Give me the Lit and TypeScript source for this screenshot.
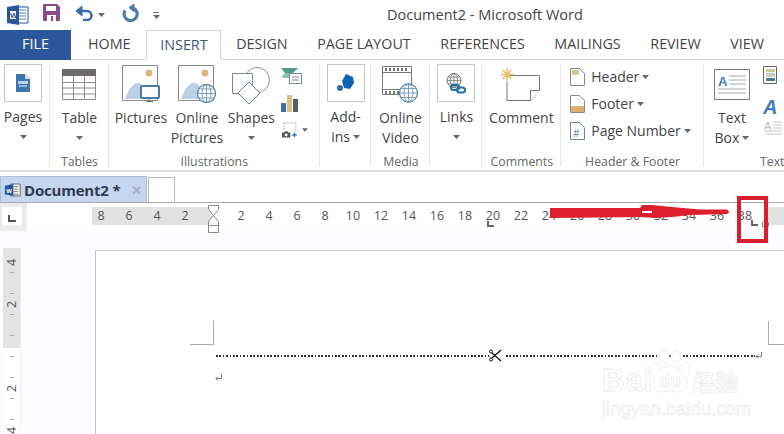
import { LitElement, html, css } from "lit";
import { customElement } from "lit/decorators.js";

const caret = html`<svg class="caret" width="7" height="4" viewBox="0 0 7 4"><path d="M0 0h7L3.500 4z" fill="#666"/></svg>`;

const icons = {
  word: html`<svg width="22" height="20" viewBox="0 0 22 20"><path d="M9 2h12v16H9z" fill="#fff" stroke="#2b579a"/><path d="M12 5h7M12 8h7M12 11h7M12 14h7" stroke="#5d7fb5"/><path d="M0 2l12-2v20L0 18z" fill="#2b579a"/><path d="M3 6h6v8H3z" fill="#fff"/><text x="3" y="13" font-size="8" font-weight="700" fill="#2b579a" font-family="Liberation Sans">W</text></svg>`,
  save: html`<svg width="17" height="17" viewBox="0 0 17 17"><path d="M1 0h13l3 3v13a1 1 0 0 1-1 1H1a1 1 0 0 1-1-1V1a1 1 0 0 1 1-1z" fill="#8a4a8c"/><path d="M3 2h10v5H3z" fill="#fff"/><path d="M4 11h9v6H4z" fill="#fff"/><path d="M8 12h2v5H8z" fill="#8a4a8c"/></svg>`,
  undo: html`<svg width="19" height="16" viewBox="0 0 19 16"><path d="M5 6h7a4.500 4.500 0 0 1 0 9H8" fill="none" stroke="#3b6ea8" stroke-width="2.600"/><path d="M7 1v10L1 6z" fill="#3b6ea8" stroke="#3b6ea8" stroke-linejoin="round"/></svg>`,
  redo: html`<svg width="18" height="18" viewBox="0 0 18 18"><path d="M11 4A6.500 6.500 0 1 1 3.200 6.500" fill="none" stroke="#4f7ea8" stroke-width="3.200"/><path d="M7 3.500L12 0v8z" fill="#4f7ea8" stroke="#4f7ea8" stroke-linejoin="round"/></svg>`,
  page: html`<svg width="14" height="18" viewBox="0 0 14 18"><path d="M0 0h9l5 5v13H0z" fill="#3d75b0"/><path d="M9 0l5 5H9z" fill="#cfe0f0"/><path d="M2 7h10v3H2z" fill="#b9d0e6"/><path d="M3 12h8" stroke="#fff"/></svg>`,
  table: html`<svg width="34" height="31" viewBox="0 0 34 31"><path d="M0 0h34v7H0z" fill="#6e6a6a"/><path d="M.5 7v23.500h33V7M.5 13.500h33M.5 19h33M.5 25h33M11.500 7v24M22.500 7v24" fill="none" stroke="#8f8a8a"/></svg>`,
  pics: html`<svg width="38" height="38" viewBox="0 0 38 38"><path d="M.5.500h35v35H.500z" fill="#fff" stroke="#8a8a8a"/><circle cx="27" cy="8" r="3.500" fill="#dcb67a"/><path d="M3 34c3-8 7-16 13-16 4 0 6 4 8 6l-3 10z" fill="#bccfe6"/><path d="M19 20h19v13H19z" fill="#fff" stroke="none"/><rect x="19" y="21" width="18" height="12" rx="1" fill="#fff" stroke="#4b7a9b" stroke-width="2"/><path d="M27 33v3M24 36.500h7" stroke="#4b7a9b"/></svg>`,
  online: html`<svg width="38" height="38" viewBox="0 0 38 38"><path d="M.5.500h35v35H.500z" fill="#fff" stroke="#8a8a8a"/><circle cx="27" cy="8" r="3.500" fill="#dcb67a"/><path d="M3 34c3-8 7-16 13-16 4 0 6 4 8 6l-3 10z" fill="#bccfe6"/><circle cx="28.500" cy="28.500" r="9" fill="#fff" stroke="#5e8cab" stroke-width="1.300"/><path d="M19.500 28.500h18M28.500 19.500v18M21 24h15M21 33h15" stroke="#5e8cab" stroke-width=".8"/><ellipse cx="28.500" cy="28.500" rx="4.500" ry="9" fill="none" stroke="#5e8cab" stroke-width=".8"/></svg>`,
  shapes: html`<svg class="ov" width="40" height="38" viewBox="0 -2 40 38"><circle cx="26" cy="13" r="12.500" fill="#fff" stroke="#8c979f"/><path d="M1.500 6.500h20v20h-20z" fill="#fff" stroke="#7d8a94"/><path d="M18 15l11 11-11 11-11-11z" fill="#fff" stroke="#5e7f98"/></svg>`,
  smart: html`<svg width="21" height="16" viewBox="0 0 21 16"><path d="M0 0h17l-5 5H4z" fill="#4f9a8a"/><path d="M0 9l4-4h5v5H4z" fill="#8ec0b0"/><rect x="8.500" y="5.500" width="12" height="10" fill="#fff" stroke="#7a8a90"/><path d="M11 9h7M11 12h7" stroke="#7a8a90"/></svg>`,
  chart: html`<svg width="17" height="17" viewBox="0 0 17 17"><path d="M0 8h5v9H0z" fill="#3c6ea3"/><path d="M6 0h5v17H6z" fill="#d8bd8d"/><path d="M12 4h5v13h-5z" fill="#5e5e5e"/></svg>`,
  shot: html`<svg width="18" height="18" viewBox="0 0 18 18"><path d="M2.500.500h14v12" fill="none" stroke="#888" stroke-dasharray="1.500 1.500"/><path d="M2.500.500v9" stroke="#888" stroke-dasharray="1.500 1.500"/><path d="M0 12h2.500l1-1.500h3l1 1.500H10v6H0z" fill="#5a5a5a"/><circle cx="5" cy="15" r="1.700" fill="#fff"/><path d="M12 15h5.500M14.750 12.250v5.500" stroke="#2b7cb5" stroke-width="1.700"/></svg>`,
  addin: html`<svg width="17" height="18" viewBox="0 0 17 18"><path d="M9 0l7 3 1 6-4 6-6-1-2-7z" fill="#0f62b5"/><circle cx="3" cy="14" r="3" fill="#2e6eb0"/></svg>`,
  video: html`<svg width="36" height="37" viewBox="0 0 36 37"><path d="M.5.500h29v28H.500z" fill="#fff" stroke="#777"/><path d="M.5 6.500h29M.5 23.500h29" stroke="#777"/><path d="M3 2h2v3H3zM7 2h2v3H7zM11 2h2v3h-2zM15 2h2v3h-2zM19 2h2v3h-2zM23 2h2v3h-2zM3 25h2v3H3zM7 25h2v3H7zM11 25h2v3h-2zM15 25h2v3h-2z" fill="#777"/><circle cx="26.500" cy="27" r="9" fill="#fff" stroke="#5e8cab" stroke-width="1.300"/><path d="M17.500 27h18M26.500 18v18M19 22.500h15M19 31.500h15" stroke="#5e8cab" stroke-width=".8"/><ellipse cx="26.500" cy="27" rx="4.500" ry="9" fill="none" stroke="#5e8cab" stroke-width=".8"/></svg>`,
  links: html`<svg width="20" height="21" viewBox="0 0 20 21"><circle cx="8" cy="7.500" r="7" fill="#fff" stroke="#777"/><path d="M1 7.500h14M8 .500v14M2 4h12M2 11h12" stroke="#777" stroke-width=".8"/><ellipse cx="8" cy="7.500" rx="3.500" ry="7" fill="none" stroke="#777" stroke-width=".8"/><rect x="5" y="12" width="8" height="5" rx="2.500" fill="none" stroke="#1f6fa5" stroke-width="2"/><rect x="11" y="14.500" width="8" height="5" rx="2.500" fill="none" stroke="#1f6fa5" stroke-width="2"/></svg>`,
  comment: html`<svg width="40" height="33" viewBox="0 0 40 33"><path d="M6 7.500h32.500V22l-9 10.500H6V14" fill="#fff" stroke="#777"/><path d="M29.500 32.500V22.500h9" fill="#fff" stroke="#777"/><g stroke="#e8c26a" stroke-width="1.600"><path d="M6 0v13M0 6.500h13M1.500 2l9 9M10.500 2l-9 9"/></g></svg>`,
  header: html`<svg width="15" height="18" viewBox="0 0 15 18"><path d="M.5.500h9l5 5v12H.500z" fill="#fff" stroke="#888"/><path d="M2 2h7v5H2z" fill="#d8c69a"/></svg>`,
  footer: html`<svg width="15" height="18" viewBox="0 0 15 18"><path d="M.5.500h9l5 5v12H.500z" fill="#fff" stroke="#888"/><path d="M1 11h13v6H1z" fill="#d8b26e"/></svg>`,
  pnum: html`<svg width="15" height="18" viewBox="0 0 15 18"><path d="M.5.500h9l5 5v12H.500z" fill="#fff" stroke="#5e8cab"/><text x="3.500" y="15" font-size="10" fill="#2b6ea5" font-family="Liberation Sans">#</text></svg>`,
  textbox: html`<svg width="36" height="31" viewBox="0 0 36 31"><path d="M.5.500h35v30H.500z" fill="#fff" stroke="#777"/><text x="4" y="17" font-size="13" font-weight="700" fill="#3f7cb8" font-family="Liberation Sans">A</text><path d="M15 7h17M15 11h17M15 15h17M4 20h28M4 24h28" stroke="#a8a8a8"/></svg>`,
  parts: html`<svg width="15" height="18" viewBox="0 0 15 18"><path d="M.5.500h13v17H.500z" fill="#fff" stroke="#666"/><path d="M3 3h9v3H3z" fill="#d8c69a"/><path d="M3 8h9M3 10h9" stroke="#999"/><path d="M3 12h9v3H3z" fill="#4b7a9b"/></svg>`,
  wordart: html`<span class="wa">A</span>`,
  drop: html`<svg width="20" height="17" viewBox="0 0 20 17"><text x="0" y="10" font-size="11" fill="#aeb8c4" font-family="Liberation Sans">A</text><path d="M9 2h9M9 5h9M9 8h9M1 11h17M1 14h17" stroke="#c4c4c4"/></svg>`,
  docw: html`<svg width="17" height="16" viewBox="0 0 20 18"><path d="M8 2h11v14H8z" fill="#fff" stroke="#555"/><path d="M11 5h6M11 8h6M11 11h6M11 14h6" stroke="#666"/><path d="M1 4l10-2v14L1 14z" fill="#2b579a"/><text x="2.500" y="12" font-size="7" font-weight="700" fill="#fff" font-family="Liberation Sans">W</text></svg>`,
  scissors: html`<svg width="13" height="13" viewBox="0 0 13 13"><path d="M12 1L3 9M12 12L3 4" stroke="#111" stroke-width="1.300" fill="none"/><circle cx="2" cy="2.500" r="1.500" fill="none" stroke="#111"/><circle cx="2" cy="10.500" r="1.500" fill="none" stroke="#111"/></svg>`,
  ret: html`<svg width="8" height="8" viewBox="0 0 8 8"><path d="M6.500 0v4.500H1M3 2.500l-2 2 2 2" fill="none" stroke="#777"/></svg>`,
};

@customElement("app-root")
export class AppRoot extends LitElement {
  static styles = css`
    :host { display: block; width: 784px; height: 434px; }
    * { box-sizing: border-box; }
    .app { position: relative; width: 784px; height: 434px; overflow: hidden; background: #fff; color: #444;
      font-family: "Open Sans", "Noto Sans", sans-serif; font-size: 14px; line-height: 20px; display: flex; flex-direction: column; }
    .title { height: 30px; flex: none; display: flex; align-items: center; position: relative; padding-left: 7px; }
    .qat { display: flex; align-items: center; }
    .q-save { margin-left: 14px; }
    .q-undo { margin-left: 15px; }
    .q-undo-c { margin-left: 4px; }
    .q-redo { margin-left: 17px; }
    .q-more { margin-left: 13px; display: flex; flex-direction: column; gap: 2px; }
    .q-more i { display: block; width: 6px; height: 1px; background: #777; }
    .q-more svg { display: block; }
    .ov { overflow: visible; }
    .doc-title { position: absolute; left: 387px; top: 5px; font-size: 14.500px; white-space: nowrap; color: #444; }
    .tabs { height: 30px; flex: none; display: flex; border-bottom: 1px solid #d4d4d4; font-size: 14.300px; }
    .tab { padding: 0 14.800px; line-height: 28px; white-space: nowrap; }
    .tab.file { width: 71px; padding: 0; background: #2b579a; color: #fff; text-align: center; height: 30px; margin-right: 2.200px; }
    .tab.insert { margin: 0 0 -1px 1.200px; height: 30px; border: 1px solid #d4d4d4; border-bottom: 1px solid #fff; background: #fff; color: #3b5a7c; width: 75px; padding: 0; text-align: center; }
    .ribbon { height: 112px; flex: none; display: flex; border-bottom: 2px solid #dcdcdc; }
    .group { position: relative; height: 110px; display: flex; flex-direction: column; }
    .group::after { content: ""; position: absolute; right: 0; top: 4px; bottom: 4px; width: 1px; background: #e2e2e2; }
    .g-pages { width: 50px; } .g-tables { width: 59px; } .g-ill { width: 211px; } .g-add { width: 52px; }
    .g-media { width: 59px; } .g-links { width: 52px; } .g-com { width: 79px; } .g-hf { width: 143px; } .g-text { width: 80px; }
    .g-text::after { display: none; }
    .gc { flex: 1; display: flex; min-height: 0; }
    .glabel { height: 18px; line-height: 20px; text-align: center; font-size: 12.300px; color: #666; white-space: nowrap; }
    .g-text .glabel { text-align: left; padding-left: 56px; }
    .btn { display: flex; flex-direction: column; align-items: center; text-align: center; white-space: nowrap; line-height: 20px; }
    .icon { height: 48px; display: flex; align-items: center; justify-content: center; flex: none; }
    .boxed { width: 38px; height: 38px; border: 1px solid #c6c6c6; margin: 4px 0 6px; flex: none; display: flex; align-items: center; justify-content: center; }
    .boxed + .lbl { margin-top: -1px; }
    .lbl { display: flex; flex-direction: column; align-items: center; gap: 0; }
    .caret { display: block; }
    .caret-line { height: 20px; display: flex; align-items: center; justify-content: center; }
    .inline-caret { display: flex; align-items: center; gap: 3px; }
    .b-pages { width: 38px; margin-left: 4px; }
    .b-table { width: 59px; }
    .b-pic { width: 56px; margin-left: 4px; } .b-onl { width: 56px; } .b-shp { width: 53px; }
    .b-add { width: 38px; margin-left: 7px; }
    .b-vid { width: 59px; padding-right: 1px; }
    .b-lnk { width: 38px; margin-left: 7px; }
    .b-com { width: 78px; }
    .b-txt { width: 50px; margin-left: 4px; }
    .col3 { display: flex; flex-direction: column; padding: 8px 0 0 3px; }
    .col3-ill { width: 30px; }
    .s1 { height: 27px; display: flex; align-items: flex-start; }
    .col3-ill .s2 { height: 26px; align-items: flex-start; }
    .s2 { height: 27px; display: flex; align-items: center; }
    .s3 { display: flex; gap: 5px; padding-left: 1px; }
    .s3 .caret { margin-top: 7px; }
    .hf { display: flex; flex-direction: column; padding: 7px 0 0 9px; gap: 7px; }
    .hf-row { display: flex; align-items: center; height: 20px; gap: 6px; white-space: nowrap; }
    .hf-row .inline-caret { gap: 3px; }
    .ts { display: flex; flex-direction: column; padding: 6px 0 0 7px; }
    .wa { font: italic 700 20px "Liberation Sans", sans-serif; color: #3f7cb8; line-height: 20px; }
    .doctabs { height: 31px; flex: none; display: flex; align-items: flex-end; padding-top: 4px; border-bottom: 1px solid #aaa; gap: 1px; }
    .dtab { width: 147px; height: 26px; background: #c5d6ef; border: 1px solid #a9bcd8; border-bottom: 0; display: flex; align-items: center; padding-left: 3px; gap: 3px; }
    .dtab b { font-size: 15px; color: #2e3d52; font-weight: 700; white-space: nowrap; letter-spacing: -.2px; }
    .dtab span { margin-left: 8px; color: #a5b1c2; font-size: 13px; font-weight: 700; }
    .dnew { width: 27px; height: 25px; border: 1px solid #bdbdbd; border-bottom: 0; background: #fff; }
    .hruler { height: 28px; flex: none; display: flex; position: relative; }
    .corner { width: 27px; background: #ebebeb; padding: 4px 5px 6px 2px; flex: none; }
    .corner > div { height: 100%; background: #fff; display: flex; align-items: center; justify-content: center; }
    .l-mark { width: 8px; height: 7px; border-left: 2px solid #555; border-bottom: 2px solid #555; margin-top: 4px; }
    .track { flex: 1; margin: 4px 0 0 60px; height: 18px; display: flex; background: linear-gradient(90deg, #fff 0, #fff 5px, #e2e2e2 5px, #e2e2e2 126px, #fff 126px, #fff 681px, #e2e2e2 681px); }
    .rn { flex: 0 0 28px; text-align: center; font-size: 12.500px; line-height: 18px; color: #555; }
    .work { flex: 1; display: flex; background: #fcfbfd; padding-top: 19px; min-height: 0; }
    .side { width: 95px; flex: none; padding-left: 3px; }
    .vruler { width: 18px; margin-top: -2px; height: 200px; background: linear-gradient(#e3e3e3 0, #e3e3e3 100px, #fff 100px); overflow: hidden; padding-top: 9px; border-right: 1px solid #eee; }
    .vc { height: 10.500px; display: flex; align-items: center; justify-content: center; position: relative; }
    .vc i { width: 4px; height: 1px; background: #aaa; display: block; }
    .vc span { font-size: 12.500px; line-height: 11px; transform: rotate(-90deg); color: #555; }
    .page { flex: 1; background: #fff; border-left: 1px solid #c4c2c6; border-top: 1px solid #c9c7cb; padding-top: 70px; position: relative; }
    .crops { display: flex; justify-content: space-between; padding-left: 94px; }
    .crop { width: 24px; height: 24px; border-right: 1px solid #aaa; border-bottom: 1px solid #aaa; }
    .crop.r { width: 16px; border-right: 0; border-left: 1px solid #aaa; }
    .dots { display: flex; align-items: center; margin: 4px 0 0 120px; width: 547px; height: 13px; }
    .dl { height: 2px; background: repeating-linear-gradient(90deg, #333 0 1.700px, transparent 1.700px 3.400px); }
    .dl1 { width: 273px; } .dl2 { width: 249px; }
    .sc { width: 17px; display: flex; justify-content: flex-start; }
    .rets { display: flex; padding: 0 0 0 119px; margin-top: 12px; height: 12px; }
    .wm { position: absolute; left: 602px; top: 350px; width: 140px; color: #fff; font-family: "Liberation Sans", sans-serif; -webkit-text-stroke: 1px #eeeeee; display: flex; flex-direction: column; }
    .wm-a { display: flex; align-items: center; line-height: 26px; font-weight: 700; white-space: nowrap; margin-top: 18px; position: relative; }
    .wm-bai { width: 45px; font-size: 31px; letter-spacing: 1px; }
    .wm-du { width: 46px; text-align: center; font-size: 18px; }
    .wm-a em { font-style: normal; font-family: "Noto Sans CJK SC", sans-serif; font-size: 22.500px; }
    .wm-b { font-size: 18.500px; line-height: 18px; white-space: nowrap; margin-top: 6px; -webkit-text-stroke: .8px #eeeeee; }
    .paw { position: absolute; left: 45px; top: 0; }
    .over { position: absolute; left: 0; top: 0; pointer-events: none; }
    .redbox { position: absolute; left: 737px; top: 196px; width: 31px; height: 47px; border: 4px solid #d81f2e; }
    .tabstop { position: absolute; width: 7px; height: 6px; border-left: 2px solid #666; border-bottom: 2px solid #666; }
    .ts1 { left: 487px; top: 221px; }
    .ts2 { left: 751px; top: 220px; }
    .wm-hole { position: absolute; left: 642px; top: 211px; width: 10px; height: 2px; background: #fff; }
  `;

  private big(cls: string, icon: unknown, lines: unknown[]) {
    return html`<div class="btn ${cls}"><div class="icon">${icon}</div><div class="lbl">${lines}</div></div>`;
  }
  private boxed(cls: string, icon: unknown, lines: unknown[]) {
    return html`<div class="btn ${cls}"><div class="boxed">${icon}</div><div class="lbl">${lines}</div></div>`;
  }

  render() {
    const caretLine = html`<div class="caret-line">${caret}</div>`;
    const nums = ["8","6","4","2","","2","4","6","8","10","12","14","16","18","20","22","24","26","28","30","32","34","36","38"];
    return html`<div class="app">
      <div class="title">
        <div class="qat">
          ${icons.word}
          <div class="q-save">${icons.save}</div>
          <div class="q-undo">${icons.undo}</div>
          <div class="q-undo-c">${caret}</div>
          <div class="q-redo">${icons.redo}</div>
          <div class="q-more"><i></i>${caret}</div>
        </div>
        <div class="doc-title">Document2 - Microsoft Word</div>
      </div>
      <div class="tabs">
        <div class="tab file">FILE</div>
        <div class="tab">HOME</div>
        <div class="tab insert">INSERT</div>
        ${["DESIGN","PAGE LAYOUT","REFERENCES","MAILINGS","REVIEW","VIEW"].map(t => html`<div class="tab">${t}</div>`)}
      </div>
      <div class="ribbon">
        <div class="group g-pages"><div class="gc">${this.boxed("b-pages", icons.page, [html`<div>Pages</div>`, caretLine])}</div><div class="glabel"></div></div>
        <div class="group g-tables"><div class="gc">${this.big("b-table", icons.table, [html`<div>Table</div>`, caretLine])}</div><div class="glabel">Tables</div></div>
        <div class="group g-ill"><div class="gc">
          ${this.big("b-pic", icons.pics, [html`<div>Pictures</div>`])}
          ${this.big("b-onl", icons.online, [html`<div>Online</div>`, html`<div>Pictures</div>`])}
          ${this.big("b-shp", icons.shapes, [html`<div>Shapes</div>`, caretLine])}
          <div class="col3 col3-ill"><div class="s1">${icons.smart}</div><div class="s2">${icons.chart}</div><div class="s3">${icons.shot}${caret}</div></div>
        </div><div class="glabel">Illustrations</div></div>
        <div class="group g-add"><div class="gc">${this.boxed("b-add", icons.addin, [html`<div>Add-</div>`, html`<div class="inline-caret">ins ${caret}</div>`])}</div><div class="glabel"></div></div>
        <div class="group g-media"><div class="gc">${this.big("b-vid", icons.video, [html`<div>Online</div>`, html`<div>Video</div>`])}</div><div class="glabel">Media</div></div>
        <div class="group g-links"><div class="gc">${this.boxed("b-lnk", icons.links, [html`<div>Links</div>`, caretLine])}</div><div class="glabel"></div></div>
        <div class="group g-com"><div class="gc">${this.big("b-com", icons.comment, [html`<div>Comment</div>`])}</div><div class="glabel">Comments</div></div>
        <div class="group g-hf"><div class="gc"><div class="hf">
          <div class="hf-row">${icons.header}<div class="inline-caret">Header ${caret}</div></div>
          <div class="hf-row">${icons.footer}<div class="inline-caret">Footer ${caret}</div></div>
          <div class="hf-row">${icons.pnum}<div class="inline-caret">Page Number ${caret}</div></div>
        </div></div><div class="glabel">Header &amp; Footer</div></div>
        <div class="group g-text"><div class="gc">
          ${this.big("b-txt", icons.textbox, [html`<div>Text</div>`, html`<div class="inline-caret">Box ${caret}</div>`])}
          <div class="ts"><div class="s1">${icons.parts}</div><div class="s2">${icons.wordart}</div><div class="s3">${icons.drop}</div></div>
        </div><div class="glabel">Text</div></div>
      </div>
      <div class="doctabs">
        <div class="dtab">${icons.docw}<b>Document2 *</b><span>✕</span></div>
        <div class="dnew"></div>
      </div>
      <div class="hruler">
        <div class="corner"><div><div class="l-mark"></div></div></div>
        <div class="track">${nums.map(n => html`<div class="rn">${n}</div>`)}</div>
      </div>
      <div class="work">
        <div class="side"><div class="vruler">
          ${[0,1,2,3,4].map(i => html`
            <div class="vc">${i === 2 ? "" : html`<span>${i < 2 ? ["4","2"][i] : ["2","4"][i-3]}</span>`}</div>
            <div class="vc"><i></i></div><div class="vc"></div><div class="vc"><i></i></div>`)}
        </div></div>
        <div class="page">
          <div class="crops"><div class="crop"></div><div class="crop r"></div></div>
          <div class="dots"><div class="dl dl1"></div><div class="sc">${icons.scissors}</div><div class="dl dl2"></div>${icons.ret}</div>
          <div class="rets">${icons.ret}</div>
        </div>
      </div>
      <div class="wm">
        <svg class="paw" width="46" height="44" viewBox="0 0 46 44" fill="#fff" stroke="#eeeeee"><ellipse cx="8" cy="20" rx="5" ry="7"/><ellipse cx="17" cy="7" rx="5" ry="6"/><ellipse cx="29" cy="7" rx="5" ry="6"/><ellipse cx="38" cy="20" rx="5" ry="7"/><path d="M23 16c9 0 17 10 17 18s-9 9-17 7c-8 2-17 1-17-7s8-18 17-18z"/></svg>
        <div class="wm-a"><span class="wm-bai">Bai</span><span class="wm-du">du</span><em>经验</em></div>
        <div class="wm-b">jingyan.baidu.com</div>
      </div>
      <svg class="over" width="784" height="434" viewBox="0 0 784 434">
        <path d="M208.500 205.500h10v4l-5 6 5 6v4h-10v-4l5-6-5-6z" fill="#fff" stroke="#888"/>
        <path d="M208.500 225.500h10v7h-10z" fill="#fff" stroke="#888"/>
        <path d="M762.500 226.500v-4l3-3 3 3v4z" fill="#fff" stroke="#888"/>
        <path d="M550 208L640 208 L642 205 L652 205 L672 207 L700 209.500 L727 209.500 Q731 212 727 214 L690 215 L672 217 L655 218 L640 217 L600 217.500 L550 218z" fill="#dd1f2d"/>
      </svg>
      <div class="wm-hole"></div>
      <div class="tabstop ts1"></div>
      <div class="tabstop ts2"></div>
      <div class="redbox"></div>
    </div>`;
  }
}
